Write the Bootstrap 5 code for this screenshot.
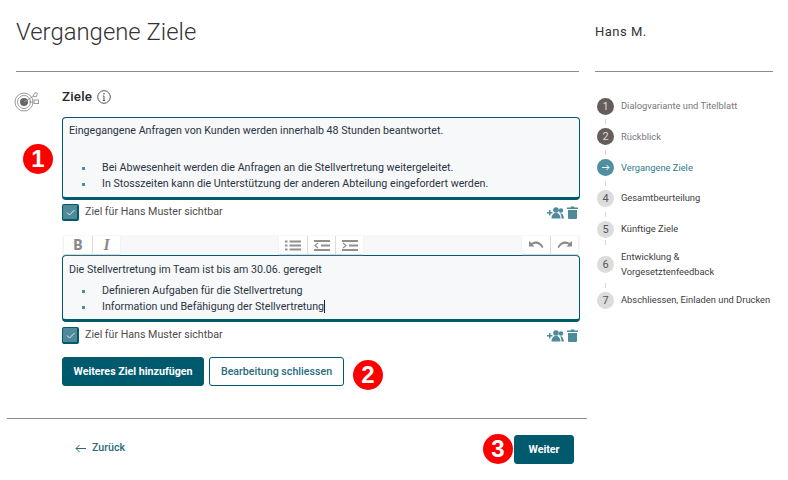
<!DOCTYPE html>
<html lang="de">
<head>
<meta charset="utf-8">
<title>Vergangene Ziele</title>
<link rel="stylesheet" href="https://cdn.jsdelivr.net/npm/bootstrap@5.3.0/dist/css/bootstrap.min.css">
<style>
html,body{height:480px;overflow:hidden;background:#fff}
body{font-family:Roboto,"Liberation Sans",sans-serif;font-size:10.67px;color:#333}
.shell{width:788px;height:480px}
.mainpane{width:587px;flex:none}
.head-band{height:72px;margin:0 8px 0 16px;border-bottom:1px solid #8c8c8c}
.page-title{font-size:23.900px;font-weight:300;color:#333;margin:0;padding-top:17px;line-height:30px}
.goal-area{position:relative;padding:16px 7px 0 62px;height:346px}
.goal-sign{position:absolute;left:14px;top:17px}
.goal-head{height:29px;font-size:13.33px;font-weight:500;color:#2a2a2a;line-height:18px;letter-spacing:.2px;gap:5px}
.info-sign{margin-top:2px}
.rich{background:#f6f8fa;border:1px solid #005a6e;border-bottom-width:3px;border-radius:4px;padding:5px 6px;color:#2b3440;line-height:16px}
.rich p{margin:0}
.rich ul{margin:0;padding-left:33px;list-style:none}
.rich li{position:relative;line-height:16px}
.rich li::before{content:"";position:absolute;left:-20px;top:7px;width:3px;height:3px;background:#4f8c9c}
.rich-a{height:83px}
.rich-a ul{margin-top:21px}
.rich-b{height:67px;padding-top:6px}
.rich-b ul{margin-top:5px}
.caret-bar{border-right:1px solid #222}
.see-row{height:35px;padding-top:4px;color:#4c4c4c;gap:6px;line-height:15px}
.see-low{padding-top:5px}
.tick-box{width:17px;height:17px;background:#4f8a9b;border:1px solid #005a6e;border-bottom-width:2px;border-right-width:2px;border-radius:2px;flex:none}
.row-acts{gap:3px;padding-right:2px;margin-top:2px}
.tool-strip{height:20px;background:#f6f8fa;padding:1px 2px 0 2px}
.tool-group{height:18px;background:#fff;box-shadow:0 1px 1px #d8d8d8}
.tool-key{width:28px;height:18px;display:flex;align-items:center;justify-content:center;border-left:1px solid #ddd;color:#8a8a8a}
.tool-key:first-child{border-left:0}
.key-b{font-size:14px;font-weight:900;line-height:1}
.key-i{font-family:"Liberation Serif",serif;font-size:16px;font-weight:700;font-style:italic;line-height:1}
.act-dark,.act-dark:hover{background:#005a6e;border:1px solid #005a6e;color:#fff;font-size:10.67px;font-weight:700;padding:0;height:29px;line-height:27px;border-radius:3px}
.act-line,.act-line:hover{background:#fff;border:1px solid #005a6e;color:#2a6a7c;font-size:10.67px;font-weight:500;padding:0;height:29px;line-height:27px;border-radius:3px}
.w142{width:142px}.w135{width:135px;margin-left:5px}.w60{width:60px}
.mark-num{width:30px;height:30px;border-radius:50%;background:#f00;color:#fff;font-family:"Liberation Sans",sans-serif;font-weight:700;font-size:24px;line-height:30px;text-align:center;flex:none}
.mark-one{position:absolute;left:23px;top:72px}
.mark-two{margin:3px 0 0 9px}
.mark-three{margin-top:-1px}
.foot-band{margin-left:7px;border-top:1px solid #8c8c8c;height:62px;padding:16px 13px 0 68px}
.back-link{color:#2a6a7c;font-weight:500;text-decoration:none;padding-top:4px;line-height:18px;gap:6px}
.foot-right{gap:1px}
.sidepane{width:178px;margin-left:8px;flex:none}
.who{height:72px;border-bottom:1px solid #8c8c8c;font-size:13px;color:#333;padding-top:23px;line-height:18px;letter-spacing:.5px}
.step-list{margin:0;padding:25.800px 0 0 2px;list-style:none;font-size:9.33px;color:#3d3d3d;white-space:nowrap}
.step-item{display:flex;align-items:center;gap:7px;height:17px;margin-bottom:13.700px;position:relative}
.step-item.tall{height:30px;margin-top:-2px;margin-bottom:12.500px;line-height:15px}
.step-item+.step-item::before{content:"";position:absolute;left:8px;top:-9px;width:1px;height:5px;background:#d4d4d4}
.step-num{width:17px;height:17px;border-radius:50%;background:#dcdcdc;color:#555;font-size:11px;line-height:17px;text-align:center;flex:none}
.step-now .step-num svg{display:block;margin:5px auto 0}
.step-done .step-num{background:#655c5c;color:#ddd}
.step-done .step-txt{color:#7a7680}
.step-now .step-num{background:#4f8f9f;color:#fff}
.step-now .step-txt{color:#2f7a8c}
</style>
</head>
<body>
<div class="shell d-flex">
  <div class="mainpane">
    <div class="head-band"><h1 class="page-title">Vergangene Ziele</h1></div>
    <div class="goal-area">
      <svg class="goal-sign" width="26" height="24" viewBox="0 0 26 24" fill="none" stroke="#9a9a9a" stroke-width="1">
        <circle cx="10" cy="13" r="9"/><circle cx="10" cy="13" r="6.500"/>
        <circle cx="10" cy="13" r="4" fill="#666" stroke="none"/>
        <path d="M10 13 20 7M15 13h5"/><path d="M19 7l2-3.500 2.500 1L22 8z"/><rect x="20" y="11" width="4.500" height="3.500"/>
      </svg>
      <div class="mark-num mark-one">1</div>
      <div class="goal-head d-flex align-items-start">Ziele
        <svg class="info-sign" width="14" height="14" viewBox="0 0 14 14" fill="none" stroke="#555"><circle cx="7" cy="7" r="6.300"/><path d="M7 6v4.500M5.800 10.500h2.400M5.800 6H7"/><circle cx="7" cy="3.800" r=".8" fill="#555" stroke="none"/></svg>
      </div>
      <div class="rich rich-a">
        <p>Eingegangene Anfragen von Kunden werden innerhalb 48 Stunden beantwortet.</p>
        <ul>
          <li>Bei Abwesenheit werden die Anfragen an die Stellvertretung weitergeleitet.</li>
          <li>In Stosszeiten kann die Unterstützung der anderen Abteilung eingefordert werden.</li>
        </ul>
      </div>
      <div class="see-row d-flex align-items-start">
        <div class="tick-box d-flex align-items-center justify-content-center"><svg width="11" height="9" viewBox="0 0 11 9" fill="none" stroke="#dfeef2"><path d="M2 4.500l2.500 2.500L9.500 2"/></svg></div>
        <span class="flex-grow-1">Ziel für Hans Muster sichtbar</span>
        <span class="row-acts d-flex align-items-center">
          <svg width="17" height="12" viewBox="0 0 17 12" fill="#4f8a9b"><path d="M0 5h2V3h1.500v2h2v1.500h-2v2H2v-2H0z"/><circle cx="9" cy="3" r="2.800"/><circle cx="14" cy="3.500" r="2.200"/><path d="M4.500 11.500c0-3.500 2-5.500 4.500-5.500s4.500 2 4.500 5.500zM14.500 11.500c0-2-.4-4-1.500-5.300 2.500-.5 3.500 2 4 5.300z"/></svg>
          <svg width="11" height="13" viewBox="0 0 11 13" fill="#4f8a9b"><path d="M0 1.500h3.500L4 .5h3l.5 1H11v1.500H0zM1 4h9v8a1 1 0 0 1-1 1H2a1 1 0 0 1-1-1z"/></svg>
        </span>
      </div>
      <div class="tool-strip d-flex justify-content-between">
        <div class="tool-group d-flex">
          <div class="tool-key key-b">B</div>
          <div class="tool-key key-i">I</div>
        </div>
        <div class="tool-group d-flex">
          <div class="tool-key"><svg width="16" height="11" viewBox="0 0 16 11" fill="none" stroke="#8f8f8f" stroke-width="2"><path d="M4.500 1.500H16M4.500 5.500H16M4.500 9.500H16M0 1.500h2.500M0 5.500h2.500M0 9.500h2.500"/></svg></div>
          <div class="tool-key"><svg width="16" height="11" viewBox="0 0 16 11" fill="none" stroke="#8f8f8f" stroke-width="2"><path d="M0 1h16M7 5.500h9M0 10h16"/><path d="M4 3 1 5.500 4 8" stroke-width="1.200"/></svg></div>
          <div class="tool-key"><svg width="16" height="11" viewBox="0 0 16 11" fill="none" stroke="#8f8f8f" stroke-width="2"><path d="M0 1h16M7 5.500h9M0 10h16"/><path d="M1 3l3 2.500L1 8" stroke-width="1.200"/></svg></div>
        </div>
        <div class="tool-group d-flex">
          <div class="tool-key"><svg width="15" height="10" viewBox="0 0 15 10" fill="#8a8a8a"><path d="M0 1v5.500h5.500L3.500 4.600C6 3 10.500 3 13 8l1.500-.7C12 1 6 0 2.300 3z"/></svg></div>
          <div class="tool-key"><svg width="15" height="10" viewBox="0 0 15 10" fill="#8a8a8a"><path d="M15 1v5.500H9.500l2-1.900C9 3 4.500 3 2 8L.5 7.300C3 1 9 0 12.700 3z"/></svg></div>
        </div>
      </div>
      <div class="rich rich-b">
        <p>Die Stellvertretung im Team ist bis am 30.06. geregelt</p>
        <ul>
          <li>Definieren Aufgaben für die Stellvertretung</li>
          <li><span class="caret-bar">Information und Befähigung der Stellvertretung</span></li>
        </ul>
      </div>
      <div class="see-row see-low d-flex align-items-start">
        <div class="tick-box d-flex align-items-center justify-content-center"><svg width="11" height="9" viewBox="0 0 11 9" fill="none" stroke="#dfeef2"><path d="M2 4.500l2.500 2.500L9.500 2"/></svg></div>
        <span class="flex-grow-1">Ziel für Hans Muster sichtbar</span>
        <span class="row-acts d-flex align-items-center">
          <svg width="17" height="12" viewBox="0 0 17 12" fill="#4f8a9b"><path d="M0 5h2V3h1.500v2h2v1.500h-2v2H2v-2H0z"/><circle cx="9" cy="3" r="2.800"/><circle cx="14" cy="3.500" r="2.200"/><path d="M4.500 11.500c0-3.500 2-5.500 4.500-5.500s4.500 2 4.500 5.500zM14.500 11.500c0-2-.4-4-1.500-5.300 2.500-.5 3.500 2 4 5.300z"/></svg>
          <svg width="11" height="13" viewBox="0 0 11 13" fill="#4f8a9b"><path d="M0 1.500h3.500L4 .5h3l.5 1H11v1.500H0zM1 4h9v8a1 1 0 0 1-1 1H2a1 1 0 0 1-1-1z"/></svg>
        </span>
      </div>
      <div class="d-flex align-items-start">
        <button type="button" class="btn act-dark w142">Weiteres Ziel hinzufügen</button>
        <button type="button" class="btn act-line w135">Bearbeitung schliessen</button>
        <div class="mark-num mark-two">2</div>
      </div>
    </div>
    <div class="foot-band d-flex justify-content-between align-items-start">
      <a href="#" class="back-link d-flex align-items-center">
        <svg width="11" height="9" viewBox="0 0 11 9" fill="none" stroke="#2a6a7c"><path d="M11 4.500H1M4.500 1 1 4.500 4.500 8"/></svg>Zurück</a>
      <div class="foot-right d-flex align-items-start">
        <div class="mark-num mark-three">3</div>
        <button type="button" class="btn act-dark w60">Weiter</button>
      </div>
    </div>
  </div>
  <aside class="sidepane">
    <div class="who">Hans M.</div>
    <ul class="step-list">
      <li class="step-item step-done"><span class="step-num">1</span><span class="step-txt">Dialogvariante und Titelblatt</span></li>
      <li class="step-item step-done"><span class="step-num">2</span><span class="step-txt">Rückblick</span></li>
      <li class="step-item step-now"><span class="step-num"><svg width="8" height="7" viewBox="0 0 8 7" fill="none" stroke="#fff"><path d="M0 3.500h7M4.500 1 7 3.500 4.500 6"/></svg></span><span class="step-txt">Vergangene Ziele</span></li>
      <li class="step-item"><span class="step-num">4</span><span class="step-txt">Gesamtbeurteilung</span></li>
      <li class="step-item"><span class="step-num">5</span><span class="step-txt">Künftige Ziele</span></li>
      <li class="step-item tall"><span class="step-num">6</span><span class="step-txt">Entwicklung &amp;<br>Vorgesetztenfeedback</span></li>
      <li class="step-item"><span class="step-num">7</span><span class="step-txt">Abschliessen, Einladen und Drucken</span></li>
    </ul>
  </aside>
</div>
<script src="https://cdn.jsdelivr.net/npm/bootstrap@5.3.0/dist/js/bootstrap.bundle.min.js"></script>
</body>
</html>
